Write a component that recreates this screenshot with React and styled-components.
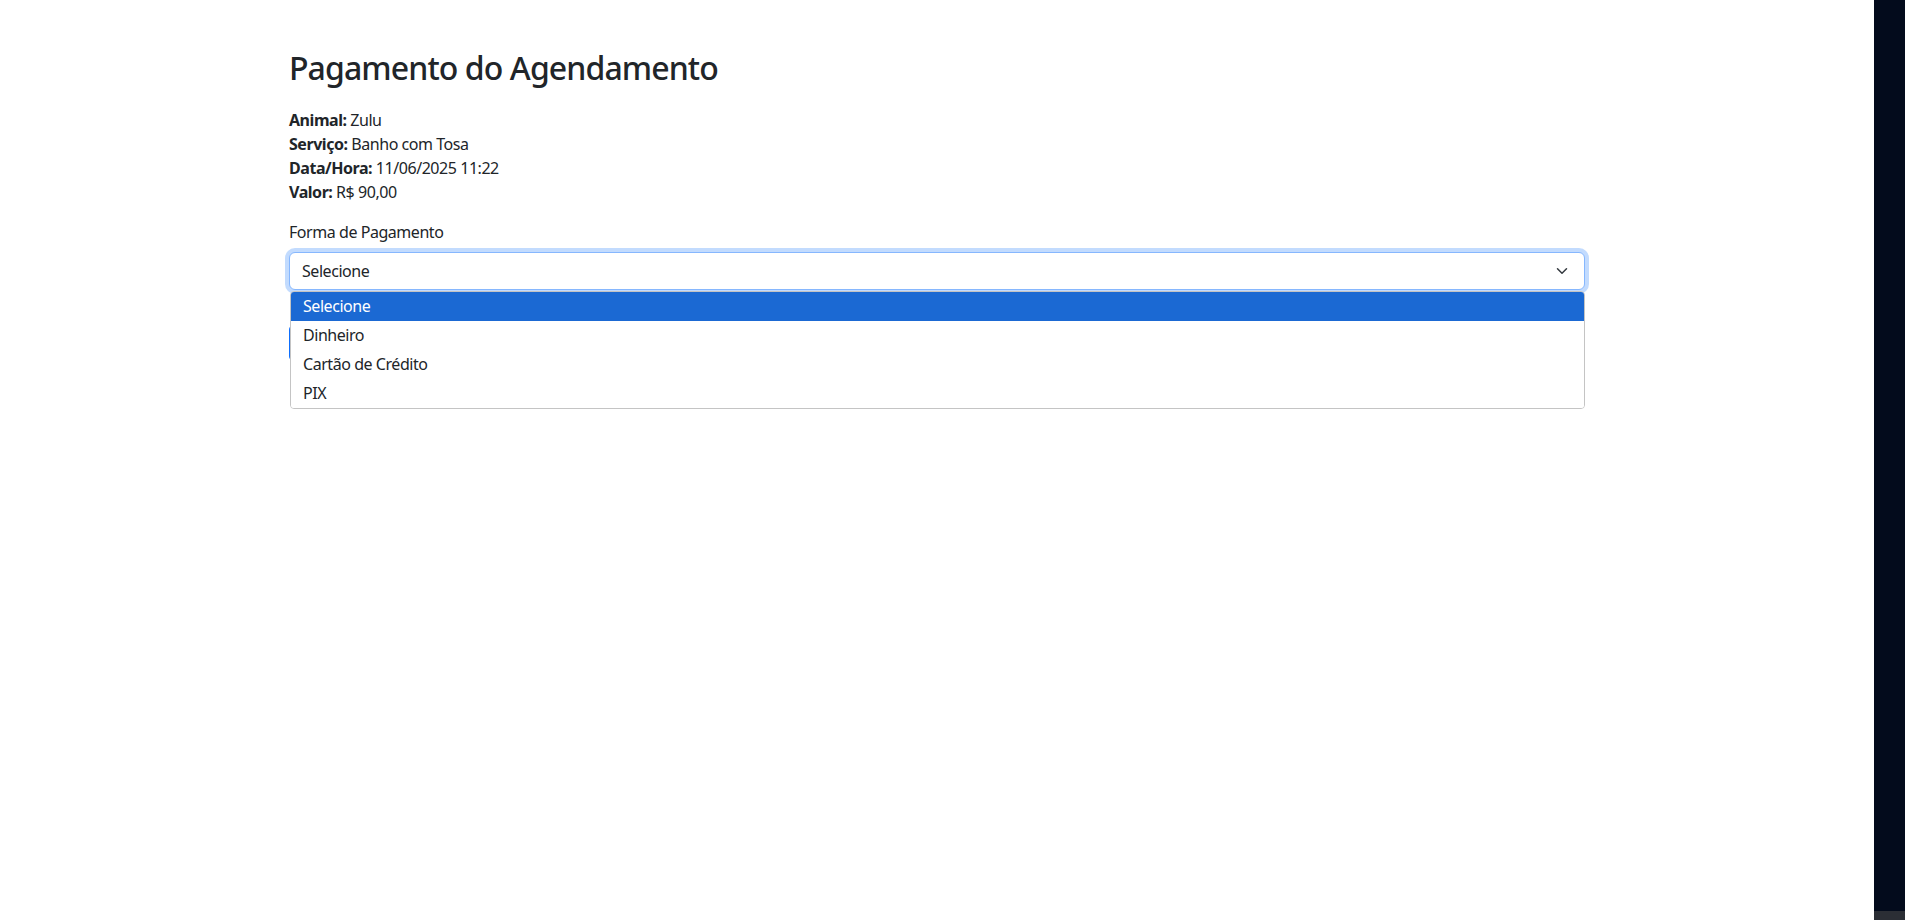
import styled, { createGlobalStyle } from 'styled-components';

const GlobalStyle = createGlobalStyle`
    body {
        margin: 0;
        font-family: "Noto Sans", "Liberation Sans", sans-serif;
        font-size: 16px;
        line-height: 1.5;
        letter-spacing: -0.45px;
        color: #212529;
        background: #fff;
    }
    * { box-sizing: border-box; }
`;

const opcoes = ["Selecione", "Dinheiro", "Cartão de Crédito", "PIX"];

const detalhes = [
    { rotulo: "Animal:", valor: "Zulu" },
    { rotulo: "Serviço:", valor: "Banho com Tosa" },
    { rotulo: "Data/Hora:", valor: "11/06/2025 11:22" },
    { rotulo: "Valor:", valor: "R$ 90,00" },
];

export default function App() {
    return (
        <Shell>
            <GlobalStyle />
            <Main>
                <Container>
                    <Title>Pagamento do Agendamento</Title>
                    <Info>
                        {detalhes.map((d) => (
                            <Line key={d.rotulo}>
                                <strong>{d.rotulo}</strong> {d.valor}
                            </Line>
                        ))}
                    </Info>

                    <Field>
                        <Label>Forma de Pagamento</Label>
                        <SelectWrap>
                            <SelectBox>
                                <span>Selecione</span>
                                <svg width="16" height="16" viewBox="0 0 16 16">
                                    <path d="M2 5l6 6 6-6" fill="none" stroke="#343a40"
                                        strokeWidth="2" strokeLinecap="round" strokeLinejoin="round" />
                                </svg>
                            </SelectBox>
                            <Dropdown>
                                {opcoes.map((o, i) => (
                                    <Option key={o} selected={i === 0}>{o}</Option>
                                ))}
                            </Dropdown>
                        </SelectWrap>
                    </Field>

                    {/* botão fica escondido atrás da lista aberta */}
                    <PayButton aria-label="Confirmar Pagamento" />
                </Container>
            </Main>
            <SideStrip />
        </Shell>
    );
}

const Shell = styled.div`
    display: flex;
    min-height: 100vh;
`;

const Main = styled.main`
    flex: 1;
`;

const Container = styled.div`
    max-width: 1320px;
    margin: 49px auto 0;
    padding: 0 12px;
`;

const Title = styled.h2`
    font-size: 32px;
    font-weight: 500;
    line-height: 1.2;
    letter-spacing: -0.9px;
    margin: 0 0 21px;
`;

const Info = styled.div`
    margin-bottom: 16px;
`;

const Line = styled.p`
    margin: 0;
    strong { font-weight: 700; }
`;

const Field = styled.div`
    margin-bottom: 34px;
`;

const Label = styled.label`
    display: block;
    margin-bottom: 8px;
`;

const SelectWrap = styled.div`
    position: relative;
`;

const SelectBox = styled.div`
    display: flex;
    align-items: center;
    justify-content: space-between;
    height: 38px;
    padding: 0 16px 0 12px;
    border: 1px solid #86b7fe;
    border-radius: 6px;
    background: #fff;
    box-shadow: 0 0 0 4px rgba(13, 110, 253, 0.25);

    svg { width: 12px; height: 12px; }
`;

const Dropdown = styled.div`
    position: absolute;
    top: 39px;
    left: 1px;
    right: 0;
    z-index: 5;
    background: #fff;
    border: 1px solid #c4c4c4;
    border-radius: 4px;
    overflow: hidden;
`;

const Option = styled.div`
    height: 29px;
    line-height: 29px;
    padding-left: 12px;
    background: ${(p) => (p.selected ? '#1b69d3' : '#fff')};
    color: ${(p) => (p.selected ? '#fff' : '#212529')};
`;

const PayButton = styled.button`
    display: block;
    width: 190px;
    height: 38px;
    background: #0d6efd;
    border: 1px solid #0d6efd;
    border-radius: 6px;
`;

const SideStrip = styled.aside`
    width: 31px;
    flex-shrink: 0;
    background: #030b1c;
    border-bottom: 9px solid #2b2e35;
`;
